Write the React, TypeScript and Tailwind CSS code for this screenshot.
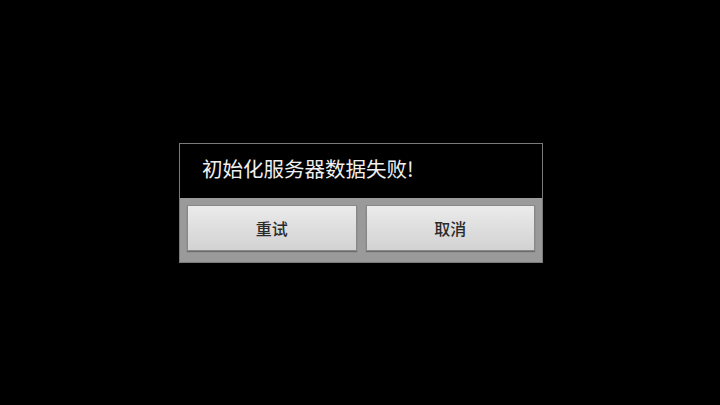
export default function App() {
  const font = { fontFamily: '"Noto Sans CJK SC", "Liberation Sans", sans-serif' };
  return (
    <div className="w-[720px] h-[405px] bg-black flex items-center justify-center" style={font}>
      <div className="w-[364px] h-[120px] border border-[#7a7a7a] flex flex-col ml-[2px]">
        <div className="h-[54px] bg-black flex items-center pl-[22px] pb-[4px]">
          <span className="text-[20.5px] text-[#f0f0f0] leading-none">初始化服务器数据失败!</span>
        </div>
        <div className="flex-1 bg-[#9a9a9a] flex gap-[9px] pl-[7px] pr-[7px] pt-[7px] pb-[11px]">
          <button className="flex-1 h-[46px] bg-gradient-to-b from-[#ebebeb] to-[#d2d2d2] border border-[#888] shadow-[0_1px_1px_rgba(0,0,0,0.3)] text-[16px] font-medium text-[#2a2a2a] flex items-center justify-center">
            重试
          </button>
          <button className="flex-1 h-[46px] bg-gradient-to-b from-[#ebebeb] to-[#d2d2d2] border border-[#888] shadow-[0_1px_1px_rgba(0,0,0,0.3)] text-[16px] font-medium text-[#2a2a2a] flex items-center justify-center">
            取消
          </button>
        </div>
      </div>
    </div>
  );
}
